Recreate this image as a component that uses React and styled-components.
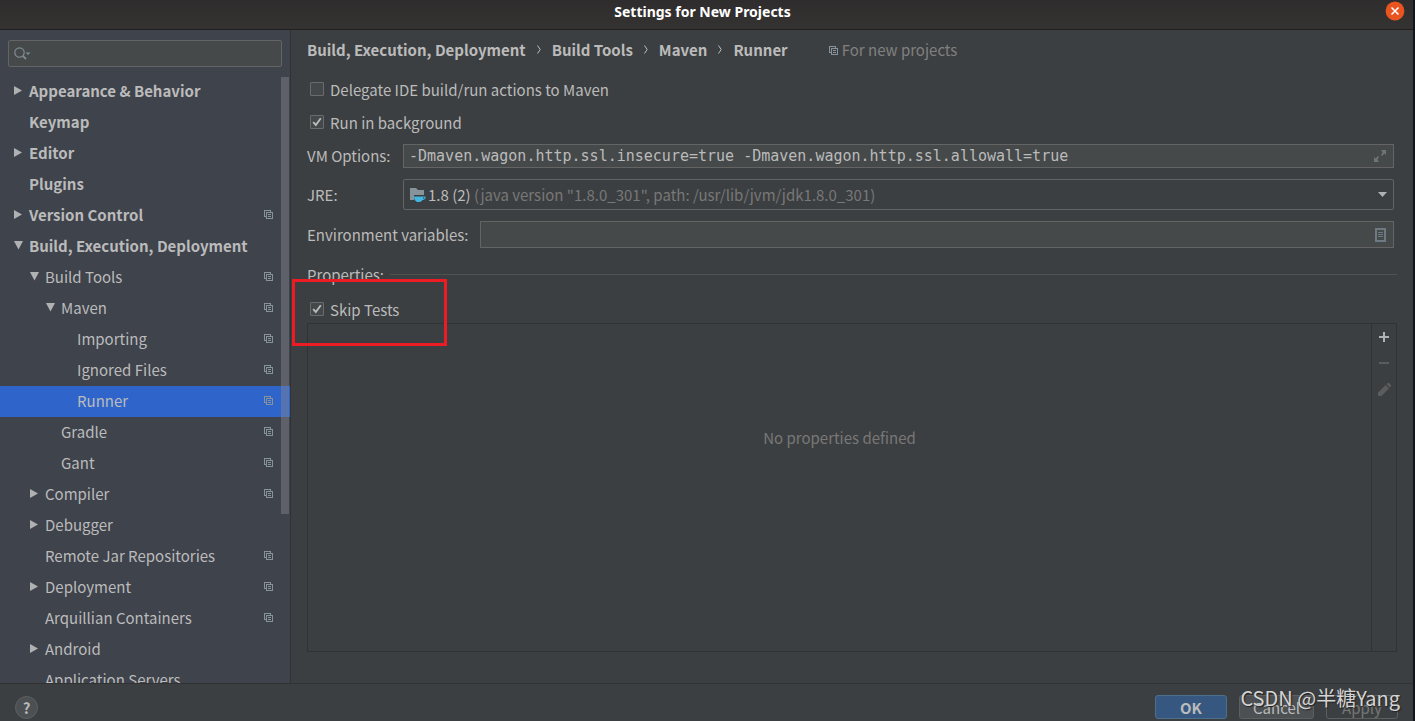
import React from "react";
import styled, { createGlobalStyle, css } from "styled-components";

const GlobalStyle = createGlobalStyle`
  *, *::before, *::after { box-sizing: border-box; }
  body {
    margin: 0;
    background: #10161b;
    color: #bbbbbb;
    font-family: "Noto Sans CJK SC", "Noto Sans", sans-serif;
    font-size: 15px;
    line-height: 24px;
  }
`;

const Window = styled.div`
  display: flex;
  flex-direction: column;
  height: 100vh;
  margin-right: 2px;
  background: #3c3f41;
  overflow: hidden;
  position: relative;
`;

const TitleBar = styled.header`
  display: grid;
  grid-template-columns: 1fr auto 1fr;
  flex: none;
  height: 30px;
  padding-right: 8px;
  background: linear-gradient(#2f2c2d, #353232);
  border-bottom: 1px solid #1f1f1f;
`;

const Title = styled.h1`
  grid-column: 2;
  margin: 0;
  color: #ffffff;
  font-family: "Noto Sans", sans-serif;
  font-size: 14px;
  font-weight: 700;
  line-height: 24px;
`;

const CloseButton = styled.button`
  display: block;
  justify-self: end;
  width: 20px;
  height: 20px;
  margin-top: 1px;
  padding: 0;
  border: 0;
  background: none;
`;

const Body = styled.div`
  display: flex;
  flex: 1;
  min-height: 0;
`;

const Sidebar = styled.aside`
  display: flex;
  flex-direction: column;
  flex: none;
  width: 291px;
  padding-top: 10px;
  background: #3f434c;
  border-right: 1px solid #323232;
`;

const SearchBox = styled.label`
  display: flex;
  align-items: center;
  flex: none;
  height: 27px;
  margin: 0 8px 9px;
  padding-left: 5px;
  background: #45494a;
  border: 1px solid #646464;
  border-radius: 2px;
`;

const PlainInput = styled.input`
  flex: 1;
  min-width: 0;
  padding: 0;
  border: 0;
  outline: 0;
  background: none;
  color: inherit;
  font-family: ${(p) => (p.$mono ? '"DejaVu Sans Mono", monospace' : "inherit")};
  font-size: 15px;
`;

const TreePane = styled.nav`
  flex: 1;
  min-height: 0;
  overflow: hidden;
  position: relative;
`;

const Tree = styled.ul`
  margin: 0;
  padding: 0;
  list-style: none;
`;

const TreeRow = styled.li`
  display: flex;
  align-items: center;
  height: 31px;
  padding: 0 17px 2px ${(p) => 13 + p.$level * 16}px;
  background: ${(p) => (p.$selected ? "#2f65ca" : "transparent")};
  font-weight: ${(p) => (p.$level === 0 ? 700 : 400)};
`;

const ArrowSlot = styled.span`
  display: flex;
  flex: none;
  width: 16px;
`;

const RowLabel = styled.span`
  flex: 1;
  white-space: nowrap;
`;

const ScrollThumb = styled.div`
  position: absolute;
  top: 1px;
  right: 1px;
  width: 8px;
  height: 72%;
  background: rgba(134, 134, 144, 0.45);
`;

const Main = styled.main`
  display: flex;
  flex-direction: column;
  flex: 1;
  min-width: 0;
  padding: 8px 16px 31px;
`;

const Breadcrumb = styled.div`
  display: flex;
  align-items: center;
  gap: 11px;
  font-weight: 700;
  margin-bottom: 14px;
`;

const Scope = styled.span`
  display: flex;
  align-items: center;
  gap: 4px;
  margin-left: 30px;
  color: #808080;
  font-weight: 400;
`;

const CheckGroup = styled.div`
  display: grid;
  justify-items: start;
  gap: 7px;
  margin-bottom: ${(p) => (p.$tight ? 1 : 9)}px;
`;

const CheckRow = styled.label`
  display: flex;
  align-items: center;
  gap: 6px;
  height: 26px;
  padding-left: 3px;
`;

const LabelText = styled.span`
  padding-top: 2px;
`;

const CheckSlot = styled.span`
  display: grid;
  width: 14px;
  height: 14px;
  > * { grid-area: 1 / 1; }
  > svg { pointer-events: none; }
`;

const CheckInput = styled.input`
  appearance: none;
  width: 14px;
  height: 14px;
  margin: 0;
  background: #43494a;
  border: 1px solid #6b6b6b;
  border-radius: 1px;
`;

const FieldRow = styled.div`
  display: flex;
  align-items: center;
  margin: 0 3px 11px 0;
`;

const FieldLabel = styled.label`
  flex: none;
  width: ${(p) => (p.$wide ? 173 : 96)}px;
`;

const fieldFrame = css`
  display: flex;
  align-items: center;
  flex: 1;
  min-width: 0;
  border: 1px solid #646464;
`;

const TextField = styled.div`
  ${fieldFrame}
  height: ${(p) => (p.$compact ? 24 : 27)}px;
  padding: 0 7px 0 5px;
  background: #45494a;
`;

const SelectField = styled.div`
  ${fieldFrame}
  position: relative;
  height: 31px;
  gap: 2px;
  padding: 0 6px;
  border-radius: 2px;
`;

const SelectText = styled.span`
  flex: 1;
  white-space: nowrap;
  overflow: hidden;
`;

const Muted = styled.span`
  color: #787878;
`;

const NativeSelect = styled.select`
  position: absolute;
  inset: 0;
  width: 100%;
  opacity: 0;
`;

const SectionHeader = styled.div`
  display: flex;
  align-items: center;
  gap: 6px;
  height: 24px;
  margin: 3px 0 10px;
  &::after {
    content: "";
    flex: 1;
    height: 1px;
    background: #515151;
  }
`;

const PropertiesPanel = styled.section`
  display: flex;
  flex: 1;
  min-height: 0;
  border: 1px solid #323232;
`;

const EmptyText = styled.div`
  flex: 1;
  padding-top: 102px;
  color: #787878;
  text-align: center;
`;

const PanelTools = styled.div`
  display: flex;
  flex-direction: column;
  align-items: center;
  width: 25px;
  border-left: 1px solid #323232;
`;

const ToolButton = styled.button`
  display: grid;
  place-items: center;
  width: 24px;
  height: 26px;
  padding: 0;
  border: 0;
  background: none;
  color: ${(p) => (p.disabled ? "#5c5c5c" : "#afb1b3")};
`;

const Footer = styled.footer`
  display: flex;
  justify-content: space-between;
  align-items: flex-start;
  flex: none;
  height: 38px;
  padding: 11px 15px 0;
  border-top: 1px solid #323232;
`;

const HelpButton = styled.button`
  width: 23px;
  height: 23px;
  margin-top: 1px;
  padding: 0;
  border: 1px solid #5e6060;
  border-radius: 50%;
  background: #4c5052;
  color: #bbbbbb;
  font: 700 15px/20px "Noto Sans CJK SC", sans-serif;
`;

const Actions = styled.div`
  display: flex;
  gap: 12px;
`;

const ActionButton = styled.button`
  min-width: 72px;
  height: 24px;
  padding: 2px 13px 0;
  border: 1px solid ${(p) => (p.$primary ? "#4c708c" : "#5e6060")};
  border-radius: 3px;
  background: ${(p) => (p.$primary ? "#365880" : p.disabled ? "transparent" : "#4c5052")};
  color: ${(p) => (p.disabled ? "#777777" : "#bbbbbb")};
  font: ${(p) => (p.$primary ? 700 : 400)} 15px/20px "Noto Sans CJK SC", sans-serif;
`;

const Highlight = styled.div`
  position: absolute;
  left: 292px;
  top: 279px;
  width: 155px;
  height: 67px;
  border: 3px solid #ed1c24;
  pointer-events: none;
`;

const Watermark = styled.div`
  position: absolute;
  right: 13px;
  bottom: 8px;
  color: #d4d4d4;
  font-size: 20px;
  line-height: 30px;
  text-shadow: 1px 1px 1px #222222;
  pointer-events: none;
`;

const CopyIcon = () => (
  <svg width="9" height="9" viewBox="0 0 9 9" fill="none" stroke="#87939a" shapeRendering="crispEdges" aria-hidden="true">
    <path d="M2.500 6.500H.5V.5H6.500V2.500M2.500 2.500H8.500V8.500H2.500ZM4 4.500H7M4 6.500H7" />
  </svg>
);

const Arrow = ({ open }) => (
  <svg width="10" height="10" viewBox="0 0 10 10" fill="#afb1b3" aria-hidden="true">
    <path d={open ? "M1 0H10L5.500 8.500Z" : "M1 0V9L9 4.500Z"} />
  </svg>
);

const Chevron = () => (
  <svg width="4" height="10" viewBox="0 0 4 10" fill="none" stroke="#bbbbbb" aria-hidden="true">
    <path d="M.5 .5L3.200 4.500L.5 8.500" />
  </svg>
);

const Check = ({ label, checked }) => (
  <CheckRow>
    <CheckSlot>
      <CheckInput type="checkbox" defaultChecked={checked} />
      {checked && (
        <svg width="14" height="14" viewBox="0 0 14 14" fill="none" stroke="#bbbbbb" strokeWidth="1.900" aria-hidden="true">
          <path d="M3.200 7.200L5.800 10L10.800 3.200" />
        </svg>
      )}
    </CheckSlot>
    <LabelText>{label}</LabelText>
  </CheckRow>
);

const items = [
  { label: "Appearance & Behavior", level: 0, arrow: "closed" },
  { label: "Keymap", level: 0 },
  { label: "Editor", level: 0, arrow: "closed" },
  { label: "Plugins", level: 0 },
  { label: "Version Control", level: 0, arrow: "closed", scoped: true },
  { label: "Build, Execution, Deployment", level: 0, arrow: "open" },
  { label: "Build Tools", level: 1, arrow: "open", scoped: true },
  { label: "Maven", level: 2, arrow: "open", scoped: true },
  { label: "Importing", level: 3, scoped: true },
  { label: "Ignored Files", level: 3, scoped: true },
  { label: "Runner", level: 3, scoped: true, selected: true },
  { label: "Gradle", level: 2, scoped: true },
  { label: "Gant", level: 2, scoped: true },
  { label: "Compiler", level: 1, arrow: "closed", scoped: true },
  { label: "Debugger", level: 1, arrow: "closed" },
  { label: "Remote Jar Repositories", level: 1, scoped: true },
  { label: "Deployment", level: 1, arrow: "closed", scoped: true },
  { label: "Arquillian Containers", level: 1, scoped: true },
  { label: "Android", level: 1, arrow: "closed" },
  { label: "Application Servers", level: 1 },
];

export default function App() {
  return (
    <>
      <GlobalStyle />
      <Window>
        <TitleBar>
          <Title>Settings for New Projects</Title>
          <CloseButton aria-label="Close">
            <svg width="20" height="20" viewBox="0 0 20 20" aria-hidden="true">
              <circle cx="10" cy="10" r="9.400" fill="#e95420" />
              <path d="M6.500 6.500L13.500 13.500M13.500 6.500L6.500 13.500" stroke="#fff" strokeWidth="1.600" />
            </svg>
          </CloseButton>
        </TitleBar>

        <Body>
          <Sidebar>
            <SearchBox>
              <svg width="17" height="14" viewBox="0 0 17 14" fill="none" stroke="#7f8b91" aria-hidden="true">
                <circle cx="5.500" cy="5.500" r="4.700" strokeWidth="1.200" />
                <path d="M8.800 8.800L12 12" strokeWidth="1.800" />
                <path d="M11.500 5.500H16.500L14 8Z" fill="#7f8b91" stroke="none" />
              </svg>
              <PlainInput type="text" aria-label="Search settings" />
            </SearchBox>
            <TreePane>
              <Tree>
                {items.map((item) => (
                  <TreeRow key={item.label} $level={item.level} $selected={item.selected}>
                    <ArrowSlot>{item.arrow && <Arrow open={item.arrow === "open"} />}</ArrowSlot>
                    <RowLabel>{item.label}</RowLabel>
                    {item.scoped && <CopyIcon />}
                  </TreeRow>
                ))}
              </Tree>
              <ScrollThumb />
            </TreePane>
          </Sidebar>

          <Main>
            <Breadcrumb>
              <span>Build, Execution, Deployment</span>
              <Chevron />
              <span>Build Tools</span>
              <Chevron />
              <span>Maven</span>
              <Chevron />
              <span>Runner</span>
              <Scope><CopyIcon />For new projects</Scope>
            </Breadcrumb>

            <CheckGroup>
              <Check label="Delegate IDE build/run actions to Maven" />
              <Check label="Run in background" checked />
            </CheckGroup>

            <FieldRow>
              <FieldLabel htmlFor="vm">VM Options:</FieldLabel>
              <TextField $compact>
                <PlainInput id="vm" type="text" $mono defaultValue="-Dmaven.wagon.http.ssl.insecure=true -Dmaven.wagon.http.ssl.allowall=true" />
                <svg width="12" height="12" viewBox="0 0 12 12" fill="#6e7376" aria-hidden="true">
                  <path d="M7 0H12V5L10.500 3.500L8 6L7 5L8.500 2.500ZM0 7L1.500 8.500L4 6L5 7L3.500 9.500L5 12H0Z" />
                </svg>
              </TextField>
            </FieldRow>

            <FieldRow>
              <FieldLabel htmlFor="jre">JRE:</FieldLabel>
              <SelectField>
                <svg width="16" height="16" viewBox="0 0 16 16" aria-hidden="true">
                  <path d="M0 1H6L8 3H14V8H4V13H0Z" fill="#87939a" />
                  <path d="M4 9.500H15.500V11.500L13.500 13H12.500Q11.500 14.500 10 15H7Q4 13.500 4 9.500ZM13 10.500V12L14.500 11V10.500Z" fill="#40b6e0" fillRule="evenodd" />
                </svg>
                <SelectText aria-hidden="true">
                  1.8 (2) <Muted>(java version "1.8.0_301", path: /usr/lib/jvm/jdk1.8.0_301)</Muted>
                </SelectText>
                <svg width="9" height="5" viewBox="0 0 9 5" fill="#afb1b3" aria-hidden="true">
                  <path d="M0 0H9L4.500 5Z" />
                </svg>
                <NativeSelect id="jre">
                  <option>1.8 (2)</option>
                </NativeSelect>
              </SelectField>
            </FieldRow>

            <FieldRow>
              <FieldLabel htmlFor="env" $wide>Environment variables:</FieldLabel>
              <TextField>
                <PlainInput id="env" type="text" />
                <svg width="11" height="14" viewBox="0 0 11 14" fill="none" stroke="#6e7a81" aria-hidden="true">
                  <path d="M1 1H10V13H1Z" strokeWidth="2" />
                  <path d="M3 4.500H8M3 6.500H8M3 8.500H8" />
                </svg>
              </TextField>
            </FieldRow>

            <SectionHeader><LabelText>Properties:</LabelText></SectionHeader>
            <CheckGroup $tight>
              <Check label="Skip Tests" checked />
            </CheckGroup>

            <PropertiesPanel>
              <EmptyText>No properties defined</EmptyText>
              <PanelTools>
                <ToolButton aria-label="Add">
                  <svg width="10" height="10" viewBox="0 0 10 10" fill="currentColor"><path d="M4 0H6V4H10V6H6V10H4V6H0V4H4Z" /></svg>
                </ToolButton>
                <ToolButton aria-label="Remove" disabled>
                  <svg width="10" height="2" viewBox="0 0 10 2" fill="currentColor"><path d="M0 0H10V2H0Z" /></svg>
                </ToolButton>
                <ToolButton aria-label="Edit" disabled>
                  <svg width="13" height="13" viewBox="0 0 13 13" fill="currentColor">
                    <path d="M0 9.500L7.500 2L11 5.500L3.500 13H0ZM8.500 1.200L9.700 0H11L13 2V3.300L11.800 4.500Z" />
                  </svg>
                </ToolButton>
              </PanelTools>
            </PropertiesPanel>
          </Main>
        </Body>

        <Footer>
          <HelpButton aria-label="Help">?</HelpButton>
          <Actions>
            <ActionButton $primary>OK</ActionButton>
            <ActionButton>Cancel</ActionButton>
            <ActionButton disabled>Apply</ActionButton>
          </Actions>
        </Footer>

        <Highlight />
        <Watermark>CSDN @半糖Yang</Watermark>
      </Window>
    </>
  );
}
